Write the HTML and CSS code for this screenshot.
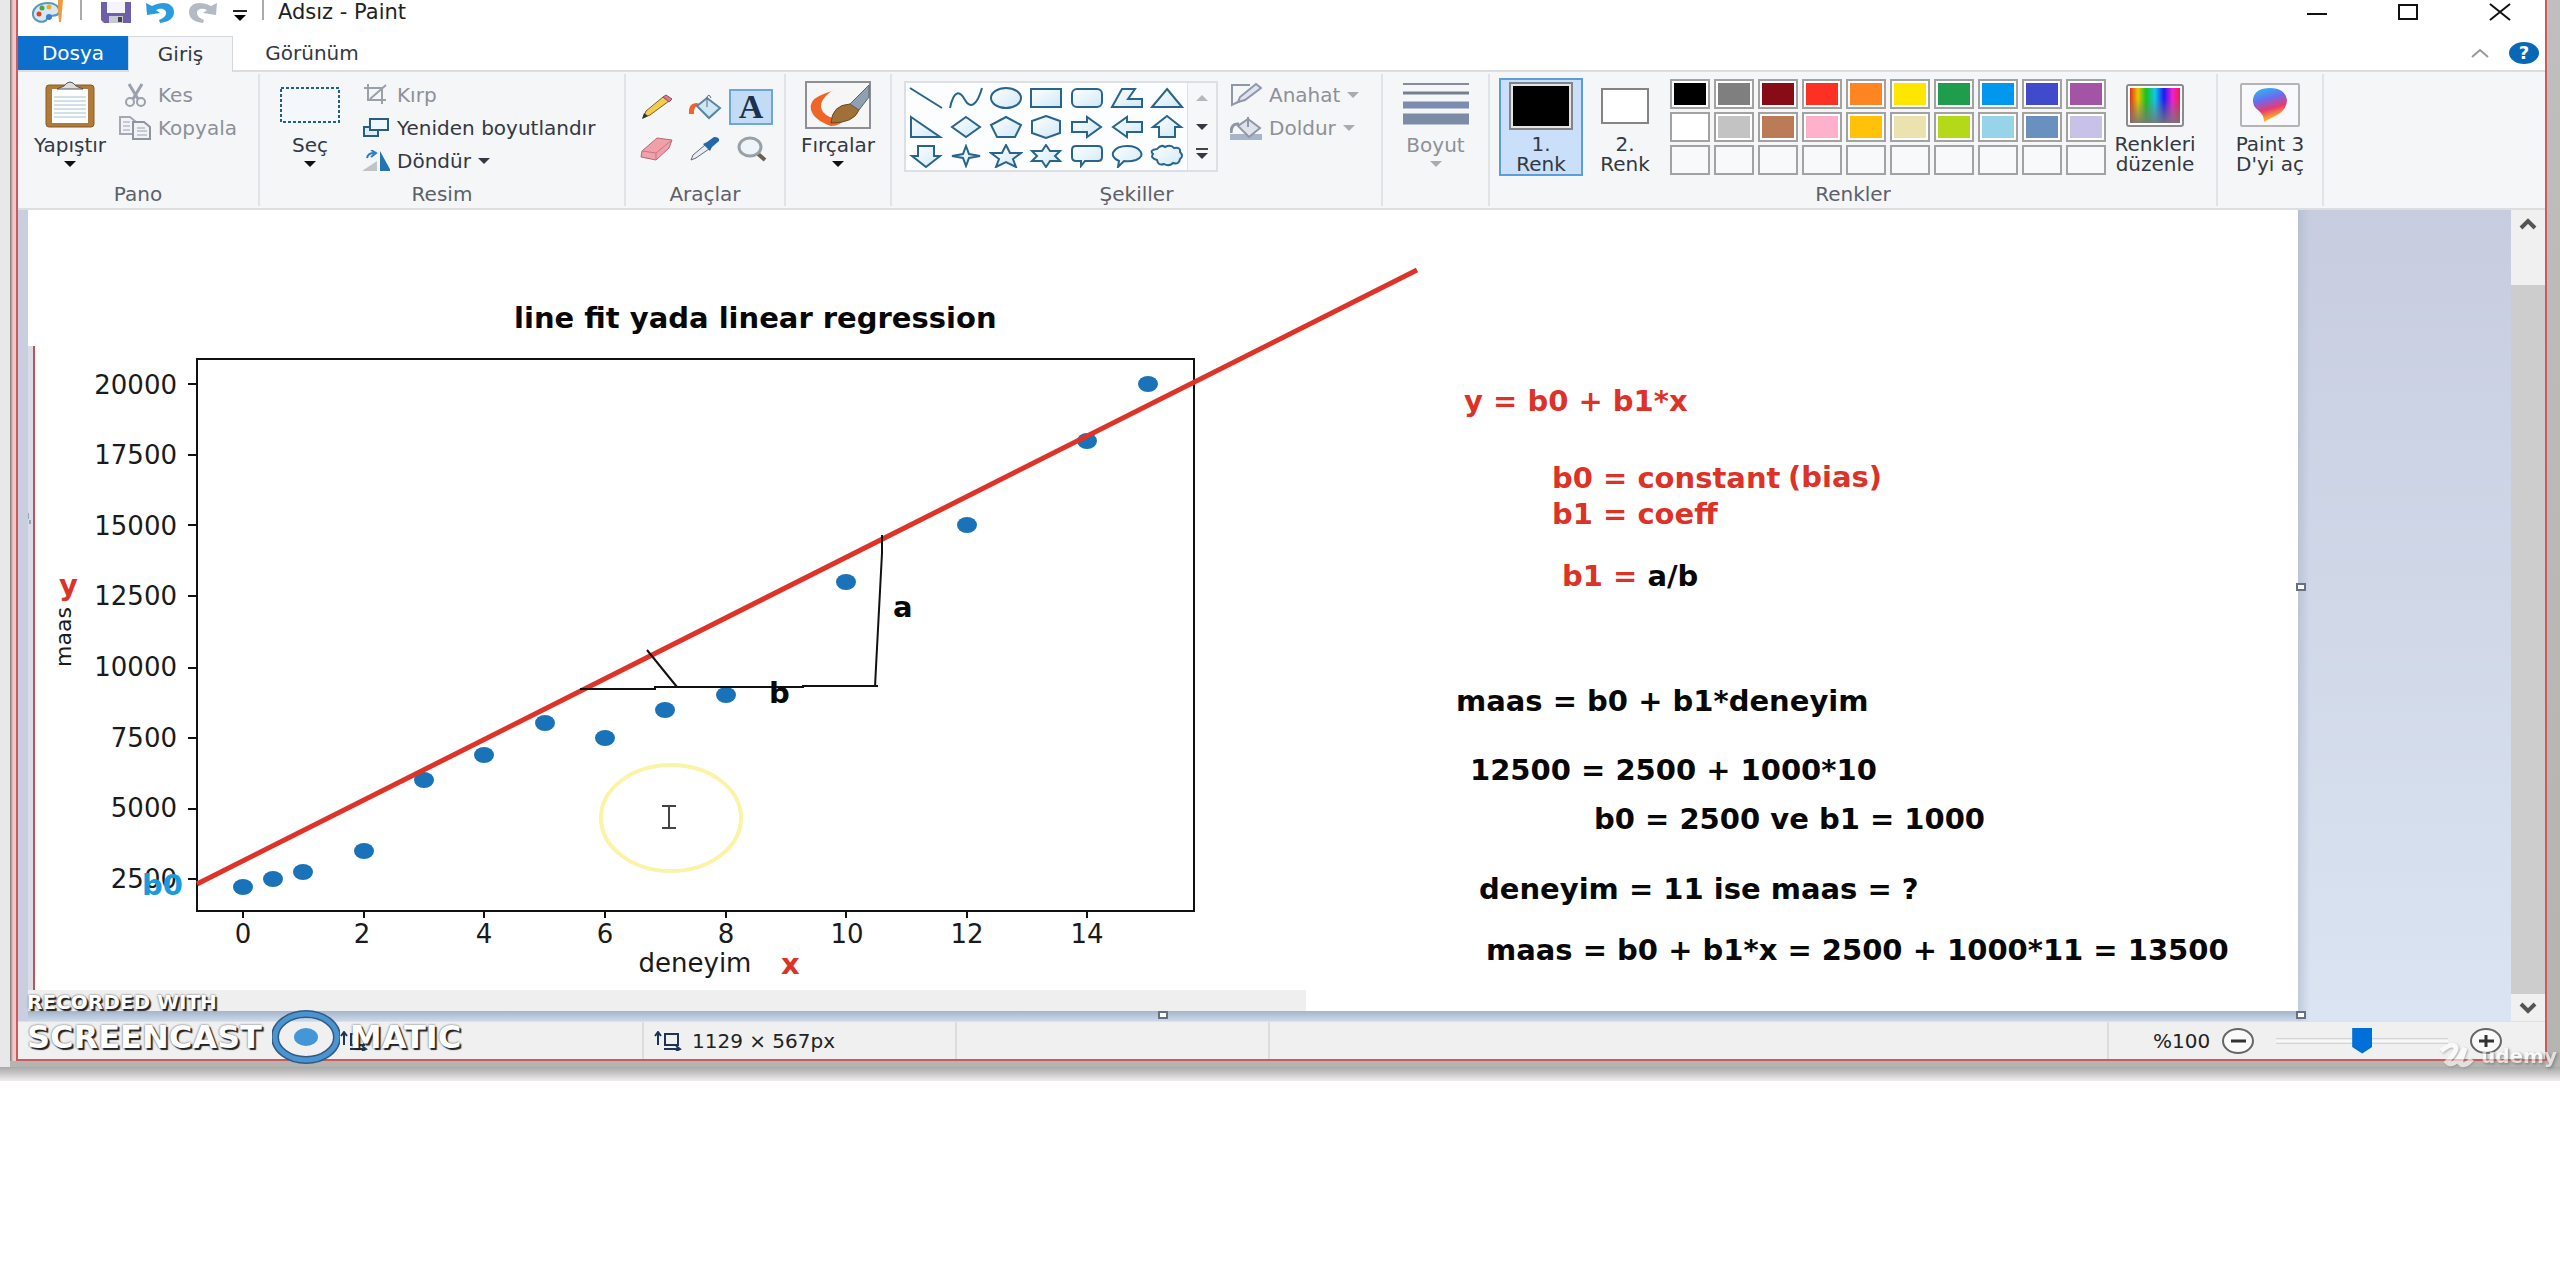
FILE: index.html
```
<!DOCTYPE html>
<html lang="tr">
<head>
<meta charset="utf-8">
<title>Adsız - Paint</title>
<link rel="stylesheet" href="styles.css">
</head>
<body>
<svg width="0" height="0" class="defs" aria-hidden="true">
  <defs>
    <linearGradient id="rainbow"><stop offset="0" stop-color="#e0301a"/><stop offset=".16" stop-color="#e8c800"/><stop offset=".32" stop-color="#18c020"/><stop offset=".5" stop-color="#10c8e8"/><stop offset=".68" stop-color="#2018f0"/><stop offset=".85" stop-color="#f020d0"/><stop offset="1" stop-color="#e82040"/></linearGradient>
    <linearGradient id="fade" x2="0" y2="1"><stop offset=".3" stop-color="#777" stop-opacity="0"/><stop offset="1" stop-color="#777" stop-opacity=".9"/></linearGradient>
    <linearGradient id="drop" x2="0.3" y2="1"><stop offset="0" stop-color="#20c8f0"/><stop offset=".4" stop-color="#6a6cf0"/><stop offset=".7" stop-color="#e83a70"/><stop offset="1" stop-color="#ffc020"/></linearGradient>
    <linearGradient id="shape" x2="1" y2="1"><stop offset="0" stop-color="#fff"/><stop offset="1" stop-color="#cfe8f8"/></linearGradient>
  </defs>
</svg>
<div class="desktop">
<main class="window">
  <header class="titlebar">
    <svg class="logo" viewBox="0 0 34 24"><path d="M16 3C6 3 0 9 1 15c1 6 8 8 12 6 3-1 1-4 4-5 4-1 9 1 10-4C28 6 22 3 16 3z" fill="#d5e8f4" stroke="#5b98c0" stroke-width="2"/><circle cx="7" cy="14" r="2.500" fill="#e0402c"/><circle cx="10" cy="8" r="2.500" fill="#4aa83c"/><circle cx="17" cy="7" r="2.500" fill="#e8b020"/><circle cx="17" cy="17" r="3" fill="#3a80d0"/><path d="M26 0h5l-1 11-1 11h-2l-1-11z" fill="#f09a3c"/></svg>
    <span class="bar"></span>
    <button aria-label="Kaydet"><svg width="30" height="22" viewBox="0 0 30 22"><path d="M0 1h30v21H3l-3-3z" fill="#6f5fa8"/><path d="M6 1h18v11H6z" fill="#f4f4fa"/><path d="M8 15h14v7H8z" fill="#c8c8d0"/><path d="M17 16h4v5h-4z" fill="#444"/></svg></button>
    <button aria-label="Geri al"><svg width="28" height="22" viewBox="0 0 28 22"><path d="M0 2l1 12 13-2-4-3c6-3 11 0 10 4-1 3-3 4-7 6l1 3c8-1 14-4 14-11C28 2 17-1 6 5z" fill="#2b9be0"/></svg></button>
    <button aria-label="Yinele"><svg width="28" height="22" viewBox="0 0 28 22"><path d="M28 2l-1 12-13-2 4-3c-6-3-11 0-10 4 1 3 3 4 7 6l-1 3C6 21 0 18 0 11 0 2 11-1 22 5z" fill="#b4bac4"/></svg></button>
    <button aria-label="Hızlı erişim"><svg width="16" height="12" viewBox="0 0 16 12"><path d="M1 1h14" stroke="#222" stroke-width="2"/><path d="M2 5h12l-6 6z"/></svg></button>
    <span class="bar"></span>
    <h1>Adsız - Paint</h1>
    <div class="winbtns">
      <button aria-label="Simge durumuna küçült"><svg width="20" height="18"><path d="M0 11h20" stroke="#111" stroke-width="2"/></svg></button>
      <button aria-label="Ekranı kapla"><svg width="22" height="18"><path d="M2 2h18v14H2z" fill="none" stroke="#111" stroke-width="2"/></svg></button>
      <button aria-label="Kapat"><svg width="22" height="18"><path d="M1 1l20 16M21 1L1 17" stroke="#111" stroke-width="2"/></svg></button>
    </div>
  </header>
  <nav class="tabs">
    <button class="file">Dosya</button><button class="active">Giriş</button><button class="view">Görünüm</button>
    <div class="help"><svg width="18" height="10"><path d="M1 9l8-7 8 7" fill="none" stroke="#999" stroke-width="2"/></svg><button aria-label="Yardım">?</button></div>
  </nav>

  <section class="ribbon">
    <div class="group pano">
      <div class="body">
        <button class="big"><svg width="52" height="48" viewBox="0 0 52 48"><rect x="2" y="4" width="48" height="42" rx="3" fill="#b07a3a" stroke="#8a5a22"/><path d="M8 8h36v34H8z" fill="#fff"/><path d="M10 16h32M10 20h32M10 24h32M10 28h32M10 32h32M10 36h32" stroke="#a8c0d0"/><path d="M13 8l7-3q6-8 12 0l7 3z" fill="#ddd" stroke="#555"/></svg>Yapıştır<i class="arr"></i></button>
        <div class="stack off">
          <button><svg width="32" height="26" viewBox="0 0 32 26"><path d="M10 2l9 15M23 2l-9 15" stroke="#9aa0ac" stroke-width="3"/><ellipse cx="11" cy="20" rx="4" ry="4" fill="none" stroke="#9aa0ac" stroke-width="2"/><ellipse cx="22" cy="20" rx="4" ry="4" fill="none" stroke="#9aa0ac" stroke-width="2"/></svg>Kes</button>
          <button><svg width="32" height="26" viewBox="0 0 32 26"><path d="M1 2h10l6 5v12H1z" fill="#f2f3f6" stroke="#a2a8b4" stroke-width="2"/><path d="M14 7h11l6 5v12H14z" fill="#f2f3f6" stroke="#8d94a2" stroke-width="2"/><path d="M4 7h7M4 11h7M4 15h7M18 13h8M18 16h10M18 20h10" stroke="#9aa0ac"/></svg>Kopyala</button>
        </div>
      </div>
      <h2>Pano</h2>
    </div>
    <div class="group resim">
      <div class="body">
        <button class="big"><svg width="64" height="48"><rect x="3" y="7" width="58" height="34" fill="#f4f8fc" stroke="#1f5f88" stroke-width="2" stroke-dasharray="3 2"/></svg>Seç<i class="arr"></i></button>
        <div class="stack">
          <button class="off"><svg width="28" height="22" viewBox="0 0 28 22"><path d="M6 0v16h18M2 4h18v16M8 15L24 1" fill="none" stroke="#9aa0a8" stroke-width="2"/></svg>Kırp</button>
          <button><svg width="28" height="22" viewBox="0 0 28 22"><path d="M2 10h14v9H2z" fill="#dcecf6" stroke="#285c80" stroke-width="2"/><path d="M8 2h18v11H8z" fill="#eef8ff" stroke="#285c80" stroke-width="2"/></svg>Yeniden boyutlandır</button>
          <button><svg width="28" height="22" viewBox="0 0 28 22"><path d="M0 21L15 11v10z" fill="#bfc4c8"/><path d="M18 1v20h11z" fill="#2474b4"/><path d="M5 8q1-5 7-5M9 0l5 3-5 4" fill="none" stroke="#2c7cc4" stroke-width="2"/></svg>Döndür<i class="arr"></i></button>
        </div>
      </div>
      <h2>Resim</h2>
    </div>
    <div class="group araclar">
      <div class="tools">
        <button aria-label="Kalem"><svg width="32" height="26" viewBox="0 0 32 26"><path d="M2 24l3-7L22 3l6 4L9 21z" fill="#f0cc50" stroke="#806020"/><path d="M22 3l3-2 6 4-3 3z" fill="#e07888" stroke="#885060"/><path d="M1 25l2-6 4 3z" fill="#333"/></svg></button>
        <button aria-label="Renkle doldur"><svg width="34" height="26" viewBox="0 0 34 26"><path d="M1 20q-1-11 8-11l4 2q-8 0-7 9z" fill="#f0642c"/><path d="M19 4l13 10-11 10L9 12z" fill="#cfe6f4" stroke="#5a84a4" stroke-width="2"/><path d="M19 13V3q2-4 4 1" fill="none" stroke="#667"/></svg></button>
        <button class="on" aria-label="Metin">A</button>
        <button aria-label="Silgi"><svg width="34" height="26" viewBox="0 0 34 26"><path d="M2 15L17 2l15 2-3 8-13 12-15-3z" fill="#f0a0a8" stroke="#b86870"/><path d="M2 15l14 2 16-13M16 17v7" fill="none" stroke="#c87880"/></svg></button>
        <button aria-label="Renk seçici"><svg width="32" height="26" viewBox="0 0 32 26"><path d="M2 24l2-5L16 9l4 4L7 22z" fill="#e6eef4" stroke="#667"/><path d="M14 8l4-2 7-5q6 0 5 4l-7 6-2 4z" fill="#2468a8"/></svg></button>
        <button aria-label="Büyüteç"><svg width="32" height="26" viewBox="0 0 32 26"><path d="M20 17l8 7" stroke="#6a6250" stroke-width="4"/><ellipse cx="13" cy="11" rx="11" ry="9" fill="#eef4f8" stroke="#98a0a8" stroke-width="3"/></svg></button>
      </div>
      <h2>Araçlar</h2>
    </div>
    <div class="group fircalar">
      <button class="big"><svg width="66" height="48" viewBox="0 0 66 48"><rect x="1" y="1" width="64" height="46" fill="#f6f6f6" stroke="#8c9094" stroke-width="2"/><path d="M27 10q-7 2-13 5Q4 20 6 29q3 10 20 16 10 0 14-8-14 3-22-6-7-10 10-22z" fill="#f06428"/><path d="M26 42q1-18 19-19l9 6Q49 42 26 42z" fill="#a07038" stroke="#6c4a20"/><path d="M45 23L64 4v12L54 29z" fill="#90a0b0" stroke="#566"/></svg>Fırçalar<i class="arr"></i></button>
    </div>
    <div class="group sekiller">
      <div class="body">
        <div class="gallery">
          <div class="shapes">
            <button aria-label="Çizgi"><svg viewBox="0 0 34 24"><path d="M1 2l32 20"/></svg></button>
            <button aria-label="Eğri"><svg viewBox="0 0 34 24"><path d="M1 22C5 3 11 5 16 14S28 20 33 2" fill="none"/></svg></button>
            <button aria-label="Oval"><svg viewBox="0 0 34 24"><ellipse cx="17" cy="12" rx="15" ry="10"/></svg></button>
            <button aria-label="Dikdörtgen"><svg viewBox="0 0 34 24"><path d="M2 3h30v18H2z"/></svg></button>
            <button aria-label="Yuvarlatılmış dikdörtgen"><svg viewBox="0 0 34 24"><rect x="2" y="3" width="30" height="18" rx="5"/></svg></button>
            <button aria-label="Çokgen"><svg viewBox="0 0 34 24"><path d="M12 3h13l-7 10h14v8H2z"/></svg></button>
            <button aria-label="Üçgen"><svg viewBox="0 0 34 24"><path d="M17 3l15 18H2z"/></svg></button>
            <button aria-label="Dik üçgen"><svg viewBox="0 0 34 24"><path d="M2 2l29 20H2z"/></svg></button>
            <button aria-label="Elmas"><svg viewBox="0 0 34 24"><path d="M17 2l14 10-14 10L3 12z"/></svg></button>
            <button aria-label="Beşgen"><svg viewBox="0 0 34 24"><path d="M17 2l15 8-6 12H8L2 10z"/></svg></button>
            <button aria-label="Altıgen"><svg viewBox="0 0 34 24"><path d="M17 1l14 5v12l-14 5-14-5V6z"/></svg></button>
            <button aria-label="Sağ ok"><svg viewBox="0 0 34 24"><path d="M2 7h15V2l14 10-14 10v-5H2z"/></svg></button>
            <button aria-label="Sol ok"><svg viewBox="0 0 34 24"><path d="M32 7H17V2L3 12l14 10v-5h15z"/></svg></button>
            <button aria-label="Yukarı ok"><svg viewBox="0 0 34 24"><path d="M17 1l14 11h-6v10H9V12H3z"/></svg></button>
            <button aria-label="Aşağı ok"><svg viewBox="0 0 34 24"><path d="M17 23l14-11h-6V2H9v10H3z"/></svg></button>
            <button aria-label="Dört köşeli yıldız"><svg viewBox="0 0 34 24"><path d="M17 2l3 8 11 2-11 2-3 8-3-8-11-2 11-2z"/></svg></button>
            <button aria-label="Beş köşeli yıldız"><svg viewBox="0 0 34 24"><path d="M17 1l4 8h11l-8 6 3 8-10-5-10 5 3-8-8-6h11z"/></svg></button>
            <button aria-label="Altı köşeli yıldız"><svg viewBox="0 0 34 24"><path d="M17 1l4 6h10l-5 5 5 5H21l-4 6-4-6H3l5-5-5-5h10z"/></svg></button>
            <button aria-label="Yuvarlatılmış belirtme"><svg viewBox="0 0 34 24"><path d="M6 2h22q4 0 4 4v7q0 4-4 4H15l-4 5v-5H6q-4 0-4-4V6q0-4 4-4z"/></svg></button>
            <button aria-label="Oval belirtme"><svg viewBox="0 0 34 24"><path d="M9 17C-3 12 4 2 17 2s20 10 9 14q-6 2-12 1l-6 6z"/></svg></button>
            <button aria-label="Bulut belirtme"><svg viewBox="0 0 34 24"><path d="M7 5q4-5 8-2 6-3 9 1 7-1 6 4 4 4 0 7-1 6-7 4-4 4-9 1-6 2-7-4-7-2-4-6-4-4 4-5z"/></svg></button>
          </div>
          <div class="gscroll"><button aria-label="Yukarı"><i class="arr up"></i></button><button aria-label="Aşağı"><i class="arr"></i></button><button aria-label="Diğer"><i class="arr more"></i></button></div>
        </div>
        <div class="stack off">
          <button><svg width="32" height="26" viewBox="0 0 32 26"><path d="M20 3H2v20l8-4" fill="none" stroke="#8f96a4" stroke-width="2"/><path d="M8 20l2-5L26 2l5 4-16 12z" fill="#dfe3ee" stroke="#8f96b0" stroke-width="2"/></svg>Anahat<i class="arr"></i></button>
          <button><svg width="32" height="26" viewBox="0 0 32 26"><path d="M0 19h32v6H0z" fill="#aab4c8"/><path d="M1 18Q1 8 9 9" fill="none" stroke="#8f96a4" stroke-width="3"/><path d="M18 4l12 9-11 9L8 11z" fill="#dde2ec" stroke="#8f96a4" stroke-width="2"/><path d="M18 12V2" stroke="#8f96a4" stroke-width="2"/></svg>Doldur<i class="arr"></i></button>
        </div>
      </div>
      <h2>Şekiller</h2>
    </div>
    <div class="group boyut off">
      <button class="big"><svg width="66" height="48"><path d="M0 3h66" stroke="#868c98" stroke-width="2"/><path d="M0 12h66" stroke="#767e96" stroke-width="3"/><path d="M0 24h66" stroke="#7c8cb0" stroke-width="7"/><path d="M0 38h66" stroke="#7c8ca6" stroke-width="11"/></svg>Boyut<i class="arr"></i></button>
    </div>
    <div class="group renkler">
      <div class="body">
        <button class="big sel"><span class="chip black"></span>1.<br>Renk</button>
        <button class="big"><span class="chip"></span>2.<br>Renk</button>
        <div class="palette">
          <button style="--c:#000"></button><button style="--c:#7f7f7f"></button><button style="--c:#880c16"></button><button style="--c:#fd3024"></button><button style="--c:#ff8422"></button><button style="--c:#ffe600"></button><button style="--c:#1f9d4c"></button><button style="--c:#0098ee"></button><button style="--c:#3f4bcc"></button><button style="--c:#a454a4"></button>
          <button style="--c:#fff"></button><button style="--c:#c3c3c3"></button><button style="--c:#bc7b57"></button><button style="--c:#ffb0cb"></button><button style="--c:#ffc208"></button><button style="--c:#ece2b0"></button><button style="--c:#b3d918"></button><button style="--c:#97d4ea"></button><button style="--c:#6a90bf"></button><button style="--c:#c8c1e8"></button>
          <button class="none"></button><button class="none"></button><button class="none"></button><button class="none"></button><button class="none"></button><button class="none"></button><button class="none"></button><button class="none"></button><button class="none"></button><button class="none"></button>
        </div>
        <button class="big edit"><svg width="60" height="48" viewBox="0 0 60 48"><rect x="2" y="3" width="56" height="41" rx="2" fill="#fff" stroke="#8c8c8c" stroke-width="2"/><path d="M5 6h50v35H5z" fill="url(#rainbow)"/><path d="M5 6h50v35H5z" fill="url(#fade)"/></svg>Renkleri düzenle</button>
      </div>
      <h2>Renkler</h2>
    </div>
    <div class="group p3d">
      <button class="big"><svg width="60" height="48" viewBox="0 0 60 48"><rect x="1" y="3" width="58" height="42" rx="1" fill="#f8f9fc" stroke="#b4b4b4" stroke-width="2"/><path d="M24 41q0-7-5-11-7-5-6-12Q15 7 30 7t17 12q0 8-8 14z" fill="url(#drop)"/></svg>Paint 3 D'yi aç</button>
    </div>
  </section>

  <section class="workspace">
    <div class="sheet">
      <svg class="canvas" viewBox="28 210 2270 801" role="img" aria-label="line fit yada linear regression">
        <path d="M28 346h6v664h-6z" fill="#dcdce6"/>
        <path d="M28 990h1278v21H28z" fill="#efefef"/>
        <path d="M34 346v644" stroke="#c0505a" stroke-width="2"/>
        <path d="M28 513v6M30 520v4" stroke="#3a7a7a" stroke-width="1"/>
        <path d="M197 359h997v552H197z" fill="none" stroke="#111" stroke-width="2"/>
        <path d="M188 384h9M188 455h9M188 525h9M188 596h9M188 668h9M188 738h9M188 809h9M188 879h9M243 911v7M364 911v7M484 911v7M605 911v7M726 911v7M846 911v7M967 911v7M1087 911v7" stroke="#111" stroke-width="2"/>
        <g class="tick end">
          <text x="177" y="394">20000</text><text x="177" y="464">17500</text><text x="177" y="535">15000</text><text x="177" y="605">12500</text><text x="177" y="676">10000</text><text x="177" y="747">7500</text><text x="177" y="817">5000</text><text x="177" y="888">2500</text>
        </g>
        <g class="tick mid">
          <text x="243" y="943">0</text><text x="362" y="943">2</text><text x="484" y="943">4</text><text x="605" y="943">6</text><text x="726" y="943">8</text><text x="847" y="943">10</text><text x="967" y="943">12</text><text x="1087" y="943">14</text>
          <text x="695" y="972">deneyim</text>
        </g>
        <text class="side" x="71" y="667" transform="rotate(-90 71 667)">maas</text>
        <g fill="#1a72b8">
          <ellipse cx="243" cy="887" rx="10" ry="8"/><ellipse cx="273" cy="879" rx="10" ry="8"/><ellipse cx="303" cy="872" rx="10" ry="8"/><ellipse cx="364" cy="851" rx="10" ry="8"/><ellipse cx="424" cy="780" rx="10" ry="8"/><ellipse cx="484" cy="755" rx="10" ry="8"/><ellipse cx="545" cy="723" rx="10" ry="8"/><ellipse cx="605" cy="738" rx="10" ry="8"/><ellipse cx="665" cy="710" rx="10" ry="8"/><ellipse cx="726" cy="695" rx="10" ry="8"/><ellipse cx="846" cy="582" rx="10" ry="8"/><ellipse cx="967" cy="525" rx="10" ry="8"/><ellipse cx="1087" cy="441" rx="10" ry="8"/><ellipse cx="1148" cy="384" rx="10" ry="8"/>
        </g>
        <path d="M197 884L1417 270" stroke="#dd3328" stroke-width="5"/>
        <path d="M580 689h75v-2h148v-1h75M882 535v18l-2 38-2 38-2 38-1 20M647 650l30 37" fill="none" stroke="#111" stroke-width="2"/>
        <ellipse cx="671" cy="818" rx="70" ry="53" fill="none" stroke="#fbf3a6" stroke-width="4"/>
        <path d="M662 806h14M669 806v22M662 828h14" stroke="#444" stroke-width="2"/>
        <g class="note">
          <text x="514" y="328">line fit yada linear regression</text>
          <text x="893" y="617">a</text><text x="769" y="703">b</text>
          <text x="1456" y="711">maas = b0 + b1*deneyim</text>
          <text x="1470" y="780">12500 = 2500 + 1000*10</text>
          <text x="1594" y="829">b0 = 2500 ve b1 = 1000</text>
          <text x="1479" y="899">deneyim = 11 ise maas = ?</text>
          <text x="1486" y="960">maas = b0 + b1*x = 2500 + 1000*11 = 13500</text>
        </g>
        <g class="note red">
          <text x="59" y="595">y</text><text x="781" y="974">x</text>
          <text x="1464" y="411">y = b0 + b1*x</text>
          <text x="1552" y="488">b0 = constant</text><text x="1788" y="487">(bias)</text>
          <text x="1552" y="524">b1 = coeff</text>
          <text x="1562" y="586">b1 = <tspan class="ink">a/b</tspan></text>
        </g>
        <text class="note blue" x="142" y="895">b0</text>
      </svg>
      <i class="handle bottom"></i><i class="handle right"></i><i class="handle corner"></i>
    </div>
    <div class="void"></div>
    <div class="vscroll"><button aria-label="Yukarı kaydır"><svg width="18" height="12"><path d="M2 10l7-7 7 7" fill="none" stroke="#555" stroke-width="4"/></svg></button><div class="thumb"></div><button aria-label="Aşağı kaydır"><svg width="18" height="12"><path d="M2 2l7 7 7-7" fill="none" stroke="#555" stroke-width="4"/></svg></button></div>
  </section>

  <footer class="status">
    <div class="cell pos"><svg width="28" height="20"><path d="M4 1v13M1 5l3-4 3 4M11 3h13v11H11zM10 18h15M22 15l4 3-4 2" fill="none" stroke="#1c3454" stroke-width="2"/></svg></div>
    <div class="cell"><svg width="28" height="20"><path d="M4 1v13M1 5l3-4 3 4M11 3h13v11H11zM10 18h15M22 15l4 3-4 2" fill="none" stroke="#1c3454" stroke-width="2"/></svg>1129 × 567px</div>
    <div class="cell"></div>
    <div class="cell"></div>
    <div class="zoom">
      <label for="zoom">%100</label>
      <button aria-label="Uzaklaştır"><svg width="32" height="26"><ellipse cx="16" cy="13" rx="15" ry="12" fill="#fafafa" stroke="#666" stroke-width="2"/><path d="M9 13h15" stroke="#333" stroke-width="3"/></svg></button>
      <input id="zoom" type="range" min="0" max="100" value="50">
      <button aria-label="Yakınlaştır"><svg width="32" height="26"><ellipse cx="16" cy="13" rx="15" ry="12" fill="#fafafa" stroke="#666" stroke-width="2"/><path d="M9 13h15M16 7v12" stroke="#333" stroke-width="3"/></svg></button>
    </div>
  </footer>
  <div class="recorder"><p>RECORDED WITH</p><div>SCREENCAST<svg width="68" height="54"><ellipse cx="34" cy="27" rx="31" ry="23" fill="none" stroke="#2f5a86" stroke-width="8"/><ellipse cx="34" cy="27" rx="31" ry="23" fill="none" stroke="#4b94d0" stroke-width="5"/><ellipse cx="34" cy="27" rx="12" ry="9" fill="#4596d8"/></svg>MATIC</div></div>
  <div class="udemy"><svg width="42" height="26" viewBox="0 0 42 26"><path d="M2 8Q12 0 16 3T8 19q5 5 12-4l6-10-5 15q4 5 12-4" fill="none" stroke="#fff" stroke-width="5"/></svg>udemy</div>
</main>
</div>
</body>
</html>
```
FILE: styles.css
```
* { box-sizing: border-box; }
body { margin: 0; background: #fff; font: 20px/20px "DejaVu Sans", Verdana, sans-serif; color: #333843; }
button { border: 0; padding: 0; background: none; font: inherit; color: inherit; display: flex; align-items: center; justify-content: center; }
h1, h2, p { margin: 0; font-weight: 400; }
.defs { display: block; }
.off { color: #8c9098; }

.desktop {
  padding: 0 13px 20px 16px;
  background:
    linear-gradient(#aaa, #c6c4c4 6px, #f0eeee) bottom / 100% 14px no-repeat,
    linear-gradient(90deg, #777, #f4c8c8 3px) 10px 0 / 6px calc(100% - 20px) no-repeat,
    linear-gradient(#c0bebe, #b4b4b0) 10px 0 / 100% calc(100% - 14px) no-repeat,
    linear-gradient(90deg, #e8e8e8, #c8c8c8);
}
.window { position: relative; border: 2px solid #cc5a5c; border-width: 0 2px 2px; background: #fff; display: flex; flex-direction: column; }

.titlebar { height: 36px; display: flex; align-items: flex-start; padding: 0 34px 0 14px; }
.titlebar svg { display: block; }
.logo { width: 34px; height: 24px; }
.bar { width: 2px; height: 20px; background: #aaa; margin: 0 14px; }
.titlebar button { height: 24px; margin-right: 15px; }
.titlebar > button:nth-of-type(1) { margin-left: 5px; }
.titlebar > button:nth-of-type(4) { margin: 4px 0 0; }
.titlebar h1 { font-size: 21px; line-height: 24px; color: #222; }
.winbtns { margin-left: auto; display: flex; gap: 70px; }
.titlebar .winbtns button { margin: 0; }

.tabs { height: 36px; display: flex; border-bottom: 2px solid #dcdde0; }
.tabs > button { height: 34px; }
.file { width: 110px; background: #0b6fcb; color: #fff; }
.tabs .active { height: 36px; padding-bottom: 2px; width: 105px; background: #f5f6f8; border: 1px solid #d6d8dc; border-bottom: 0; }
.view { width: 158px; }
.help { margin-left: auto; display: flex; align-items: center; gap: 20px; padding-right: 6px; }
.help button { width: 30px; height: 22px; border-radius: 50%; background: #0868b8; color: #fff; font-weight: 700; font-size: 18px; }

.ribbon { height: 138px; display: flex; background: #f5f6f8; border-bottom: 2px solid #dcdee1; }
.group { height: 132px; margin-top: 2px; padding-top: 4px; border-right: 2px solid #e1e3e6; display: flex; flex-direction: column; align-items: center; }
.group h2 { margin-top: auto; height: 22px; font-size: 20px; color: #5c6068; }
.body { display: flex; width: 100%; align-items: flex-start; }
.big { flex-direction: column; justify-content: flex-start; line-height: 20px; text-align: center; gap: 8px; padding-top: 3px; }
.big svg { margin-bottom: -2px; }
.arr { border: 6px solid transparent; border-top: 6px solid currentColor; border-bottom: 0; }
.big .arr { color: #111; margin-top: -2px; }
.off .arr { color: #a8acb2; }
.stack { display: flex; flex-direction: column; align-items: flex-start; }
.stack button { height: 33px; gap: 7px; }
.pano { width: 242px; }
.pano .body { padding-left: 14px; gap: 11px; }
.pano .big { width: 76px; }
.resim { width: 366px; }
.resim .big { width: 100px; }
.resim .stack { margin-left: 2px; }
.araclar { width: 160px; }
.tools { display: grid; grid-template-columns: 48px 48px 48px; row-gap: 6px; padding-top: 11px; }
.tools button { height: 36px; }
.tools .on { width: 44px; border: 2px solid #6ca6dc; background: #c3dcf6; font: 700 34px/34px "Liberation Serif", serif; color: #1c3050; }
.fircalar { width: 106px; }
.sekiller { width: 491px; }
.sekiller .body { padding-left: 12px; gap: 12px; }
.gallery { display: flex; width: 314px; height: 91px; margin-top: 3px; border: 2px solid #dcdfe3; background: #fcfdfe; }
.shapes { flex: 1; display: grid; grid-template: repeat(3, 1fr) / repeat(7, 1fr); }
.shapes svg { width: 34px; height: 24px; fill: url(#shape); stroke: #28648c; stroke-width: 2; }
.gscroll { width: 29px; border-left: 1px solid #dcdfe3; display: grid; grid-template-rows: repeat(3, 1fr); background: #f6f7f9; }
.up { transform: rotate(180deg); color: #b4b8bc; }
.more { box-shadow: 0 -3px #f6f7f9, 0 -5px #444; }
.boyut { width: 107px; }
.renkler { width: 728px; }
.renkler .body { padding-left: 9px; }
.renkler .big { width: 84px; height: 98px; gap: 0; padding: 0; border: 2px solid transparent; display: block; line-height: 20px; }
.renkler .sel { border-color: #5a9edc; background: #c9dffa; }
.chip { display: block; width: 48px; height: 36px; margin: 8px auto 10px; border: 2px solid #848484; background: #fff; }
.chip.black { width: 64px; height: 48px; margin: 2px auto 4px; background: #000; box-shadow: inset 0 0 0 2px #e4e4e4; }
.palette { display: grid; grid-template-columns: repeat(10, 40px); grid-auto-rows: 30px; gap: 3px 4px; margin: 1px 0 0 3px; }
.palette button { border: 2px solid #a2a2a2; box-shadow: inset 0 0 0 2px #fff; background: var(--c); }
.palette .none { background: #f8f9fa; box-shadow: none; }
.renkler .edit { width: 104px; margin-left: -3px; }
.edit svg { display: block; margin: 2px auto 4px; }
.p3d { width: 106px; }
.p3d .big { display: block; width: 90px; }
.p3d svg { display: block; margin: 0 auto 5px; }

.workspace { display: flex; padding-left: 10px; background: #c9cfe0; }
.sheet { flex: 1; position: relative; padding-bottom: 10px; background: linear-gradient(#a4b4cc, #cdd9e8) bottom / 100% 10px no-repeat; }
.canvas { display: block; width: 100%; height: auto; background: #fff; }
.void { width: 213px; background: linear-gradient(90deg, #a8b4cc88, transparent 12px), linear-gradient(#c7cddf, #dae4f2); }
.handle { position: absolute; width: 10px; height: 8px; background: #fff; border: 2px solid #667080; }
.bottom { left: calc(50% - 5px); bottom: 2px; }
.right { right: -8px; top: 46%; }
.corner { right: -8px; bottom: 2px; }
.vscroll { width: 34px; background: #f0f0f0; display: flex; flex-direction: column; }
.vscroll button { height: 27px; }
.thumb { flex: 1; margin-top: 48px; background: #cdcdcd; }
.canvas text { font-family: "DejaVu Sans", Verdana, sans-serif; }
.tick { font-size: 26px; fill: #1a1a1a; }
.end { text-anchor: end; }
.mid { text-anchor: middle; }
.side { font-size: 22px; fill: #1a1a1a; }
.note { font-size: 29px; font-weight: 700; fill: #080808; }
.red { fill: #dc3228; }
.blue { fill: #1b9bdc; }
.ink { fill: #080808; }

.status { height: 38px; display: flex; background: #f0f0f0; border-top: 1px solid #e0e0e0; color: #222; }
.cell { display: flex; align-items: center; gap: 10px; padding-left: 10px; border-right: 2px solid #dcdcdc; width: 313px; }
.cell.pos { width: 626px; padding-left: 322px; }
.cell:nth-child(4) { flex: 1; }
.zoom { width: 436px; display: flex; align-items: center; padding-left: 44px; }
.zoom button { margin: 0 12px; }
.zoom input { appearance: none; width: 192px; height: 26px; margin: 0; background: linear-gradient(#c8c8c8, #f8f8f8 2px, #f8f8f8 4px, #c8c8c8) center / 172px 6px no-repeat; }
.zoom input::-webkit-slider-thumb { appearance: none; width: 20px; height: 26px; background: #0070d8; clip-path: polygon(0 0, 100% 0, 100% 75%, 50% 100%, 0 75%); }

.recorder { position: absolute; left: 9px; bottom: -5px; color: #fff; font-weight: 700; text-shadow: 2px 2px 1px #222, 0 0 2px #444; }
.recorder p { font-weight: 700; font-size: 20px; line-height: 16px; }
.recorder div { display: flex; align-items: center; gap: 10px; font-size: 32px; line-height: 54px; }
.udemy { position: absolute; right: -12px; bottom: -10px; display: flex; align-items: center; font-weight: 700; color: #fff; opacity: .6; text-shadow: 1px 1px 2px #777; filter: drop-shadow(1px 1px 1px #888); }
```
